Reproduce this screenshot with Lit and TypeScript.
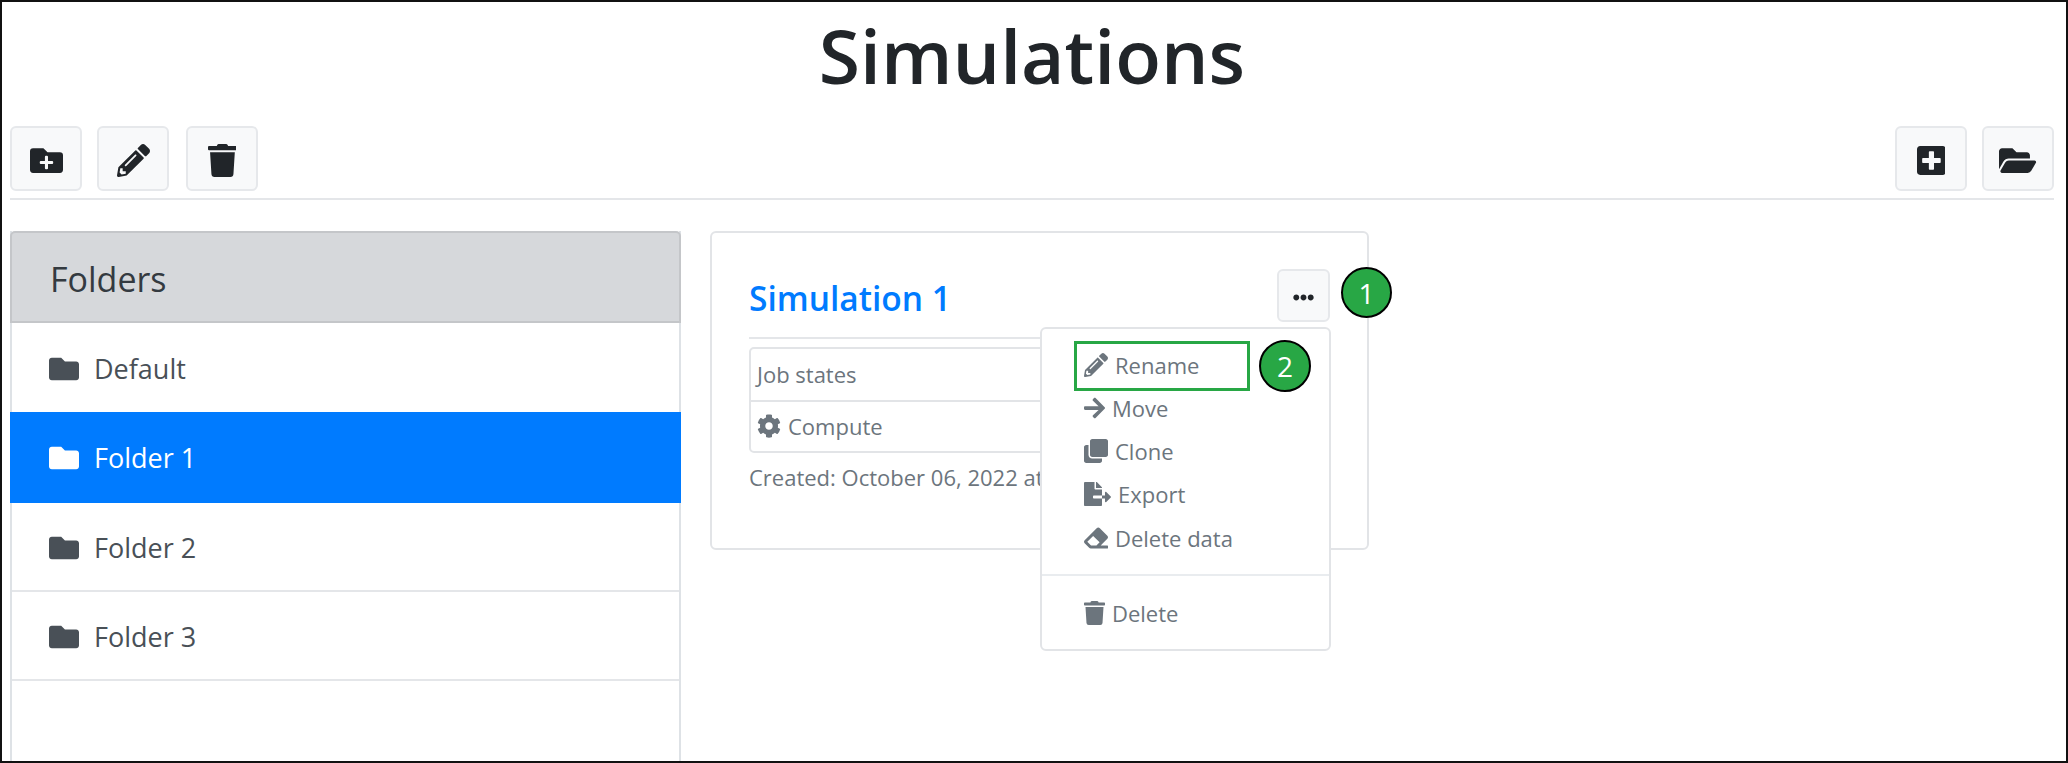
import { LitElement, css, html, svg } from 'lit'
import { customElement } from 'lit/decorators.js'

const ICONS: Record<string, [number, string]> = {
  folder: [512, 'M464 128H272l-64-64H48C21.49 64 0 85.49 0 112v288c0 26.51 21.49 48 48 48h416c26.51 0 48-21.49 48-48V176c0-26.51-21.49-48-48-48z'],
  folderPlus: [512, 'M464,128H272L208,64H48A48,48,0,0,0,0,112V400a48,48,0,0,0,48,48H464a48,48,0,0,0,48-48V176A48,48,0,0,0,464,128ZM359.5,296a16,16,0,0,1-16,16h-64v64a16,16,0,0,1-16,16h-16a16,16,0,0,1-16-16V312h-64a16,16,0,0,1-16-16V280a16,16,0,0,1,16-16h64V200a16,16,0,0,1,16-16h16a16,16,0,0,1,16,16v64h64a16,16,0,0,1,16,16Z'],
  pencil: [512, 'M497.9 142.1l-46.1 46.1c-4.7 4.7-12.3 4.7-17 0l-111-111c-4.7-4.7-4.7-12.3 0-17l46.1-46.1c18.7-18.7 49.1-18.7 67.9 0l60.1 60.1c18.8 18.7 18.8 49.1 0 67.9zM284.2 99.8L21.6 362.4.4 483.9c-2.9 16.4 11.4 30.6 27.8 27.8l121.5-21.3 262.6-262.6c4.7-4.7 4.7-12.3 0-17l-111-111c-4.8-4.7-12.4-4.7-17.1 0zM124.1 339.9c-5.5-5.5-5.5-14.3 0-19.8l154-154c5.5-5.5 14.3-5.5 19.8 0s5.5 14.3 0 19.8l-154 154c-5.5 5.5-14.3 5.5-19.8 0zM88 424h48v36.3l-64.5 11.3-31.1-31.1L51.7 376H88v48z'],
  trash: [448, 'M432 32H312l-9.4-18.7A24 24 0 0 0 281.1 0H166.8a23.72 23.72 0 0 0-21.4 13.3L136 32H16A16 16 0 0 0 0 48v32a16 16 0 0 0 16 16h416a16 16 0 0 0 16-16V48a16 16 0 0 0-16-16zM53.2 467a48 48 0 0 0 47.9 45h245.8a48 48 0 0 0 47.9-45L416 128H32z'],
  plusSquare: [448, 'M400 32H48C21.5 32 0 53.5 0 80v352c0 26.5 21.5 48 48 48h352c26.5 0 48-21.5 48-48V80c0-26.5-21.5-48-48-48zm-32 252c0 6.6-5.4 12-12 12h-92v92c0 6.6-5.4 12-12 12h-56c-6.6 0-12-5.4-12-12v-92H92c-6.6 0-12-5.4-12-12v-56c0-6.6 5.4-12 12-12h92v-92c0-6.6 5.4-12 12-12h56c6.6 0 12 5.4 12 12v92h92c6.6 0 12 5.4 12 12v56z'],
  folderOpen: [576, 'M572.694 292.093L500.27 416.248A63.997 63.997 0 0 1 444.989 448H45.025c-18.523 0-30.064-20.093-20.731-36.093l72.424-124.155A64 64 0 0 1 152 256h399.964c18.523 0 30.064 20.093 20.73 36.093zM152 224h328v-48c0-26.51-21.49-48-48-48H272l-64-64H48C21.49 64 0 85.49 0 112v278.046l69.077-118.418C86.214 242.25 117.989 224 152 224z'],
  ellipsis: [512, 'M328 256c0 39.8-32.2 72-72 72s-72-32.2-72-72 32.2-72 72-72 72 32.2 72 72zm104-72c-39.8 0-72 32.2-72 72s32.2 72 72 72 72-32.2 72-72-32.2-72-72-72zm-352 0c-39.8 0-72 32.2-72 72s32.2 72 72 72 72-32.2 72-72-32.2-72-72-72z'],
  cog: [512, 'M487.4 315.7l-42.6-24.6c4.3-23.2 4.3-47 0-70.2l42.6-24.6c4.9-2.8 7.1-8.6 5.5-14-11.1-35.6-30-67.8-54.7-94.6-3.8-4.1-10-5.1-14.8-2.3L380.8 110c-17.9-15.4-38.5-27.3-60.8-35.1V25.8c0-5.6-3.9-10.5-9.4-11.7-36.7-8.2-74.3-7.8-109.2 0-5.5 1.2-9.4 6.1-9.4 11.7V75c-22.2 7.9-42.8 19.8-60.8 35.1L88.7 85.5c-4.9-2.8-11-1.9-14.8 2.3-24.7 26.7-43.6 58.9-54.7 94.6-1.7 5.4.6 11.2 5.5 14L67.3 221c-4.3 23.2-4.3 47 0 70.2l-42.6 24.6c-4.9 2.8-7.1 8.6-5.5 14 11.1 35.6 30 67.8 54.7 94.6 3.8 4.1 10 5.1 14.8 2.3l42.6-24.6c17.9 15.4 38.5 27.3 60.8 35.1v49.2c0 5.6 3.9 10.5 9.4 11.7 36.7 8.2 74.3 7.8 109.2 0 5.5-1.2 9.4-6.1 9.4-11.7v-49.2c22.2-7.9 42.8-19.8 60.8-35.1l42.6 24.6c4.9 2.8 11 1.9 14.8-2.3 24.7-26.7 43.6-58.9 54.7-94.6 1.5-5.5-.7-11.3-5.6-14.1zM256 336c-44.1 0-80-35.9-80-80s35.9-80 80-80 80 35.9 80 80-35.9 80-80 80z'],
  arrow: [448, 'M190.5 66.9l22.2-22.2c9.4-9.4 24.6-9.4 33.9 0L441 239c9.4 9.4 9.4 24.6 0 33.9L246.6 467.3c-9.4 9.4-24.6 9.4-33.9 0l-22.2-22.2c-9.5-9.5-9.3-25 .4-34.3L311.4 296H24c-13.3 0-24-10.7-24-24v-32c0-13.3 10.7-24 24-24h287.4L190.9 101.2c-9.8-9.3-10-24.8-.4-34.3z'],
  clone: [512, 'M464 0c26.51 0 48 21.49 48 48v288c0 26.51-21.49 48-48 48H176c-26.51 0-48-21.49-48-48V48c0-26.51 21.49-48 48-48h288M176 416c-44.112 0-80-35.888-80-80V128H48c-26.51 0-48 21.49-48 48v288c0 26.51 21.49 48 48 48h288c26.51 0 48-21.49 48-48v-48H176z'],
  fileExport: [576, 'M384 121.9c0-6.3-2.5-12.4-7-16.9L279.1 7c-4.5-4.5-10.6-7-17-7H256v128h128zM571 308l-95.7-96.4c-10.1-10.1-27.4-3-27.4 11.3V288h-64v64h64v65.2c0 14.3 17.3 21.4 27.4 11.3L571 332c6.6-6.6 6.6-17.4 0-24zm-379 28v-32c0-8.8 7.2-16 16-16h176V160H248c-13.2 0-24-10.8-24-24V0H24C10.7 0 0 10.7 0 24v464c0 13.3 10.7 24 24 24h336c13.3 0 24-10.7 24-24V352H208c-8.8 0-16-7.2-16-16z'],
  eraser: [512, 'M497.941 273.941c18.745-18.745 18.745-49.137 0-67.882l-160-160c-18.745-18.745-49.136-18.746-67.883 0l-256 256c-18.745 18.745-18.745 49.137 0 67.882l96 96A48.004 48.004 0 0 0 144 480h356c6.627 0 12-5.373 12-12v-40c0-6.627-5.373-12-12-12H355.883l142.058-142.059zm-302.627-62.627l137.373 137.373L265.373 416H150.628l-80-80 124.686-124.686z'],
}

const icon = (name: string, size: number) => {
  const [w, d] = ICONS[name]
  return html`<svg class="ic" width=${(size * w) / 512} height=${size} viewBox="0 0 ${w} 512" fill="currentColor">${svg`<path d=${d}></path>`}</svg>`
}

const FOLDERS = ['Default', 'Folder 1', 'Folder 2', 'Folder 3']
const MENU = [
  { icon: 'pencil', label: 'Rename' },
  { icon: 'arrow', label: 'Move' },
  { icon: 'clone', label: 'Clone' },
  { icon: 'fileExport', label: 'Export' },
  { icon: 'eraser', label: 'Delete data' },
]

@customElement('app-root')
export class AppRoot extends LitElement {
  render() {
    return html`
      <h1>Simulations</h1>
      <div class="toolbar">
        <div class="group">
          <button class="gap-a">${icon('folderPlus', 33)}</button>
          <button class="gap-b">${icon('pencil', 33)}</button>
          <button>${icon('trash', 33)}</button>
        </div>
        <div class="group">
          <button class="gap-c">${icon('plusSquare', 33)}</button>
          <button>${icon('folderOpen', 33)}</button>
        </div>
      </div>
      <div class="main">
        <aside>
          <div class="side-head">Folders</div>
          ${FOLDERS.map((f, i) => html`
            <div class="row ${i === 1 ? 'active' : ''}">${icon('folder', 30)}<span>${f}</span></div>
          `)}
        </aside>
        <section class="card">
          <div class="card-head">
            <span class="sim-title">Simulation 1</span>
            <button class="more">${icon('ellipsis', 21)}</button>
          </div>
          <div class="jobs">
            <div class="job-cell">Job states</div>
            <div class="job-cell compute">${icon('cog', 24)}<span>Compute</span></div>
          </div>
          <div class="created">Created: October 06, 2022 at</div>
          <div class="badge badge-one">1</div>
          <div class="menu">
            ${MENU.map(m => html`<div class="item">${icon(m.icon, 24)}<span>${m.label}</span></div>`)}
            <div class="menu-sep"></div>
            <div class="item">${icon('trash', 24)}<span>Delete</span></div>
            <div class="highlight"></div>
            <div class="badge badge-two">2</div>
          </div>
        </section>
      </div>
    `
  }

  static styles = css`
    :host {
      display: flex;
      flex-direction: column;
      box-sizing: border-box;
      width: 2068px;
      height: 763px;
      overflow: hidden;
      border: 2px solid #111;
      padding: 0 12px 0 8px;
      background: #fff;
      font-family: "Open Sans", "Noto Sans", sans-serif;
      color: #212529;
    }
    .ic {
      display: block;
      flex: none;
    }
    h1 {
      margin: 0;
      height: 124px;
      display: flex;
      align-items: center;
      justify-content: center;
      font-size: 75px;
      font-weight: 600;
      padding-bottom: 18px;
      box-sizing: border-box;
    }
    .toolbar {
      display: flex;
      justify-content: space-between;
      padding-bottom: 7px;
      border-bottom: 2px solid #e4e6e9;
    }
    .group {
      display: flex;
    }
    button {
      display: flex;
      align-items: center;
      justify-content: center;
      box-sizing: border-box;
      width: 72px;
      height: 65px;
      padding: 4px 0 0;
      background: #f8f9fa;
      border: 2px solid #e6e8eb;
      border-radius: 6px;
      color: #212529;
    }
    .gap-a { margin-right: 15px; }
    .gap-b { margin-right: 17px; }
    .gap-c { margin-right: 15px; }
    .main {
      flex: 1;
      display: flex;
      gap: 29px;
      margin-top: 31px;
      min-height: 0;
    }
    aside {
      box-sizing: border-box;
      width: 671px;
      border-left: 2px solid #dee2e6;
      border-right: 2px solid #dee2e6;
    }
    .side-head {
      box-sizing: border-box;
      height: 92px;
      display: flex;
      align-items: center;
      margin: 0 -2px;
      padding: 3px 0 0 38px;
      background: #d6d8db;
      border: 2px solid #c4c6c9;
      border-radius: 5px 5px 0 0;
      font-size: 34px;
      font-weight: 500;
      color: #343a40;
    }
    .row {
      box-sizing: border-box;
      height: 89px;
      display: flex;
      align-items: center;
      gap: 15px;
      padding: 2px 0 0 37px;
      font-size: 27px;
      color: #495057;
      border-bottom: 2px solid #e4e6e9;
    }
    .side-head + .row {
      border-bottom: none;
    }
    .row.active {
      height: 91px;
      margin: 0 -2px;
      padding: 0 0 0 39px;
      background: #007bff;
      color: #fff;
      border-bottom: none;
    }
    .card {
      position: relative;
      box-sizing: border-box;
      width: 659px;
      height: 319px;
      padding: 36px 37px 0;
      border: 2px solid #e2e4e7;
      border-radius: 6px;
    }
    .card-head {
      display: flex;
      align-items: center;
      justify-content: space-between;
      padding-bottom: 15px;
      border-bottom: 2px solid #e4e6e9;
    }
    .sim-title {
      padding-top: 4px;
      font-size: 33.5px;
      font-weight: 600;
      color: #007bff;
    }
    .more {
      width: 53px;
      height: 53px;
    }
    .jobs {
      margin-top: 8px;
      border: 2px solid #e2e4e7;
      border-radius: 5px;
      font-size: 22px;
      color: #6c757d;
    }
    .job-cell {
      box-sizing: border-box;
      height: 51px;
      display: flex;
      align-items: center;
      gap: 7px;
      padding: 0 0 2px 6px;
    }
    .compute {
      border-top: 2px solid #e2e4e7;
    }
    .created {
      margin-top: 9px;
      line-height: 30px;
      font-size: 22px;
      color: #6c757d;
    }
    .menu {
      position: absolute;
      top: 94px;
      right: 36px;
      box-sizing: border-box;
      width: 291px;
      height: 324px;
      padding: 14px 0 0 42px;
      background: #fff;
      border: 2px solid #e2e4e7;
      border-radius: 6px;
      font-size: 22px;
      color: #6c757d;
    }
    .item {
      height: 43.25px;
      display: flex;
      align-items: center;
      gap: 7px;
    }
    .menu-sep {
      height: 2px;
      margin: 15px 0 15px -42px;
      background: #e9ecef;
    }
    .highlight {
      position: absolute;
      left: 32px;
      top: 12px;
      box-sizing: border-box;
      width: 176px;
      height: 50px;
      border: 3px solid #28a745;
    }
    .badge {
      position: absolute;
      box-sizing: border-box;
      display: flex;
      align-items: center;
      justify-content: center;
      border: 2px solid #000;
      border-radius: 50%;
      background: #28a745;
      color: #fff;
      font-size: 28px;
    }
    .badge-one {
      left: 629px;
      top: 34px;
      width: 51px;
      height: 51px;
    }
    .badge-two {
      left: 217px;
      top: 11px;
      width: 52px;
      height: 52px;
    }
  `
}

declare global {
  interface HTMLElementTagNameMap {
    'app-root': AppRoot
  }
}
